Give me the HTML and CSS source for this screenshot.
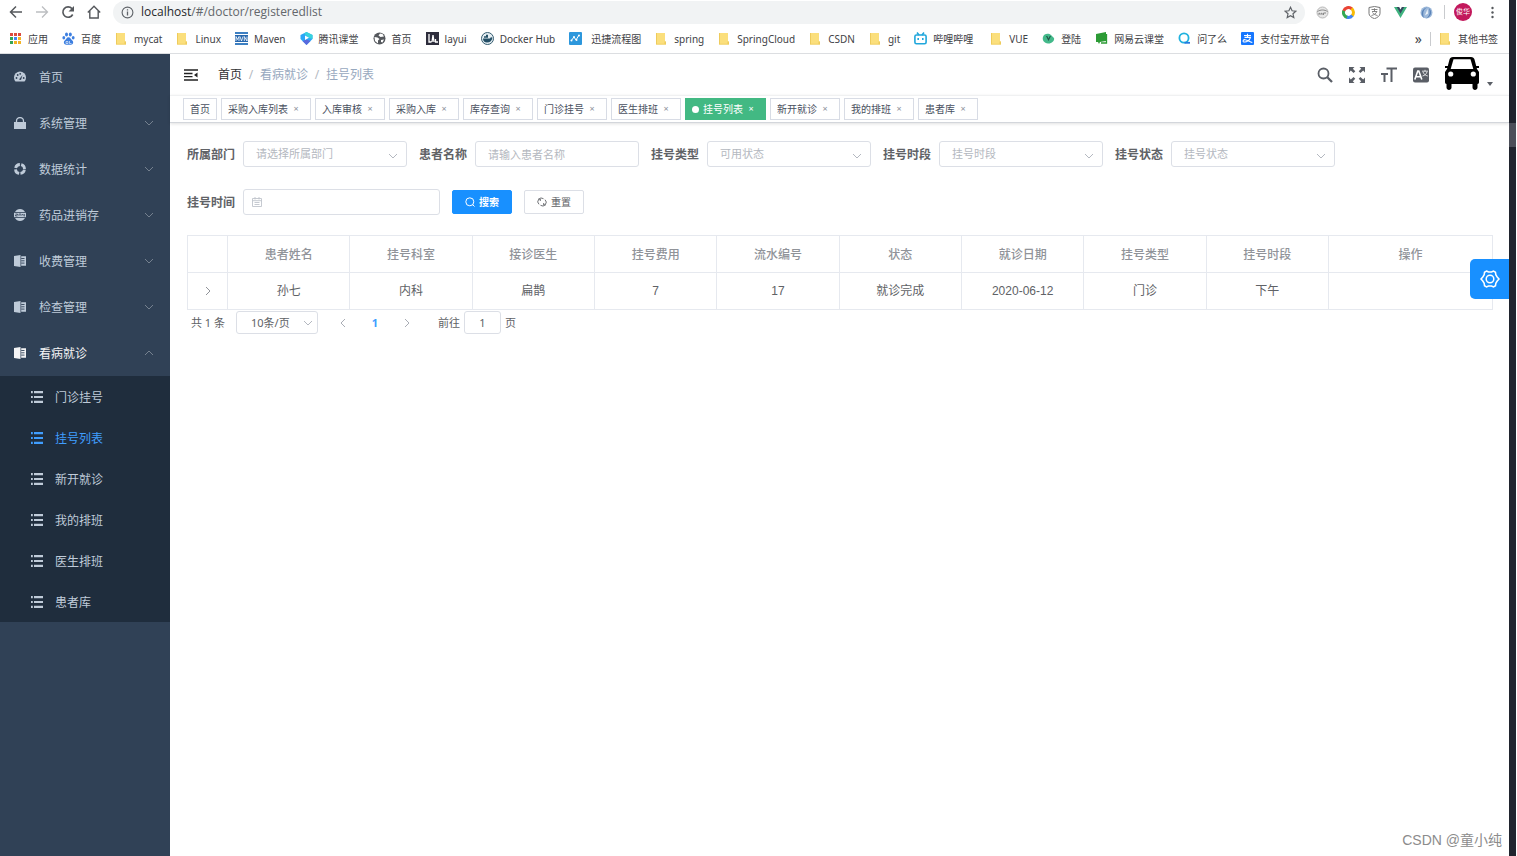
FILE: index.html
```html
<!DOCTYPE html>
<html lang="zh-CN">
<head>
<meta charset="utf-8">
<title>挂号列表</title>
<link rel="stylesheet" href="styles.css">
</head>
<body>
<svg class="defs" aria-hidden="true">
  <symbol id="folder" viewBox="0 0 13 13"><path d="M1 1h9v8l1 1v2.500H1z" fill="#fbdf7c"/><path d="M1 1h1v11.500H1zM1 11.800h10v.8H1zM9.500 9.500h1.500v2.500h-1.500z" fill="#eecb5c"/></symbol>
  <symbol id="down" viewBox="0 0 10 10"><path d="M1 3l4 4 4-4" fill="none" stroke="currentColor"/></symbol>
  <symbol id="right" viewBox="0 0 10 10"><path d="M3 1l4 4-4 4" fill="none" stroke="currentColor"/></symbol>
  <symbol id="book" viewBox="0 0 12 12"><path d="M0 1l6.500-1v12L0 11zM7.200 1.200H12v9.600H7.200z" fill="currentColor"/><path d="M7.200 3.500h3.300M7.200 5.800h3.300M7.200 8.100h3.300" stroke="#304156" stroke-width=".9"/></symbol>
  <symbol id="list" viewBox="0 0 12 12"><path d="M0 1.200h1.800M0 6h1.800M0 10.800h1.800M3 1.200h9M3 6h9M3 10.800h9" stroke="currentColor" stroke-width="2.200"/></symbol>
</svg>
<div class="screen">
<div class="browser">
  <header class="chrome">
    <div class="toolbar">
      <div class="history">
        <button aria-label="后退"><svg viewBox="0 0 14 14"><path d="M13 7H2M7 1.500L1.500 7 7 12.500" fill="none" stroke="#55585c" stroke-width="1.500"/></svg></button>
        <button aria-label="前进"><svg viewBox="0 0 14 14"><path d="M1 7h11M7 1.500L12.500 7 7 12.500" fill="none" stroke="#bcbec1" stroke-width="1.300"/></svg></button>
        <button aria-label="刷新"><svg viewBox="0 0 14 14"><path d="M11.700 9.500A5.200 5.200 0 1 1 11 3.600" fill="none" stroke="#55585c" stroke-width="1.600"/><path d="M13 1v5.500H7.500z" fill="#55585c"/></svg></button>
        <button aria-label="主页"><svg viewBox="0 0 14 14"><path d="M.8 7.500L7 1.300l6.200 6.200M2.800 6v7h8.400V6" fill="none" stroke="#55585c" stroke-width="1.400"/></svg></button>
      </div>
      <div class="omnibox">
        <svg class="ic13" viewBox="0 0 13 13"><circle cx="6.500" cy="6.500" r="5.400" fill="none" stroke="#5f6368" stroke-width="1.100"/><path d="M6.500 5.600v4M6.500 3.200v1.400" stroke="#5f6368" stroke-width="1.300"/></svg>
        <span class="url"><b>localhost</b>/#/doctor/registeredlist</span>
        <svg class="ic13" viewBox="0 0 13 13"><path d="M6.500 1.300l1.600 3.500 3.700.4-2.800 2.600.8 3.800-3.300-1.900-3.300 1.900.8-3.800L1.200 5.200l3.700-.4z" fill="none" stroke="#5f6368" stroke-width="1.200"/></svg>
      </div>
      <div class="extensions">
        <svg class="ic13" viewBox="0 0 13 13"><circle cx="6.500" cy="6.500" r="5.500" fill="#e6e6e6" stroke="#b8b8b8"/><path d="M1.500 5.500c3-2 7-2 10 0M3 9V7l1.500 1L6 7v2M7.500 9V7H10" fill="none" stroke="#888"/></svg>
        <svg class="ic13" viewBox="0 0 13 13" fill="none" stroke-width="3"><path d="M1.700 5A5 5 0 0 1 9.800 2.800" stroke="#e94335"/><path d="M9.500 2.500A5 5 0 0 1 10 10" stroke="#f9bb05"/><path d="M10.300 9.500A5 5 0 0 1 4.500 11" stroke="#4285f4"/><path d="M5 11.200A5 5 0 0 1 1.700 4.800" stroke="#34a853"/></svg>
        <svg class="ic13" viewBox="0 0 13 13"><path d="M1 1.500l5.500-1 5.500 1v6c0 2.500-2.500 4-5.500 5.200C3.500 11.500 1 10 1 7.500z" fill="#fff" stroke="#777"/><path d="M3.500 3.500h6M6.500 2.300v3M4 5.500h5c-1 2-3 3.500-5.500 4M4.500 6.500c1 1.500 3 2.700 5 3" fill="none" stroke="#777" stroke-width=".9"/></svg>
        <svg class="ic13" viewBox="0 0 13 13"><path d="M0 1h4l2.500 4.500L9 1h4L6.500 12z" fill="#3fb37f"/><path d="M2.700 1h2.500l1.300 2.400L7.800 1h2.500L6.500 7.500z" fill="#35495e"/></svg>
        <svg class="ic13" viewBox="0 0 13 13"><circle cx="6.500" cy="6.500" r="6" fill="#9db9da"/><path d="M8.500 1C3 3 2.500 7 4 12 0 9 1 2 8.500 1zM6 12.500C11 9 9.500 5 9 2c4 4 2 9-3 10.500z" fill="#5a83b8"/><path d="M7.500 3L5 9.500l3-2z" fill="#eef4fa"/></svg>
      </div>
      <span class="rule"></span>
      <button class="profile">俊华</button>
      <button class="dots" aria-label="菜单"><svg class="ic13" viewBox="0 0 13 13" fill="#55585c"><circle cx="6.500" cy="2" r="1.200"/><circle cx="6.500" cy="6.500" r="1.200"/><circle cx="6.500" cy="11" r="1.200"/></svg></button>
    </div>
    <nav class="bookmarks">
      <a href="#"><svg viewBox="0 0 13 13"><path d="M1 1h3v3H1zM5 1h3v3H5zM9 1h3v3H9z" fill="#dc4b3e"/><path d="M1 5h3v3H1z" fill="#35a455"/><path d="M5 5h3v3H5z" fill="#4285f4"/><path d="M9 5h3v3H9zM5 9h3v3H5zM9 9h3v3H9z" fill="#f3b325"/><path d="M1 9h3v3H1z" fill="#35a455"/><path d="M4 0h1v13H4zM8 0h1v13H8zM0 4h13v1H0zM0 8h13v1H0z" fill="#fff"/></svg>应用</a>
      <a href="#"><svg viewBox="0 0 13 13" fill="#3d7fe0"><ellipse cx="4.500" cy="2.500" rx="1.500" ry="2"/><ellipse cx="8.300" cy="2.500" rx="1.500" ry="2"/><ellipse cx="1.800" cy="5.700" rx="1.400" ry="1.800"/><ellipse cx="11.200" cy="5.700" rx="1.400" ry="1.800"/><path d="M6.500 5.300c2 0 2.300 2 3.800 3.200 1.700 1.500.8 4.300-1.500 4.200H4.200C2 12.700 1 10 2.800 8.500 4.300 7.300 4.500 5.300 6.500 5.300z"/><path d="M4 9.500h2v2H4zM7.500 9v2.500h2" fill="none" stroke="#fff" stroke-width=".6"/></svg>百度</a>
      <a href="#"><svg><use href="#folder"/></svg>mycat</a>
      <a href="#"><svg><use href="#folder"/></svg>Linux</a>
      <a href="#"><svg viewBox="0 0 13 13"><path d="M0 0h13v2H0zM0 11h13v2H0z" fill="#3c7fc2"/><path d="M0 3h13v7H0z" fill="#2767ae"/><path d="M1 9V4.500l1.500 3 1.500-3V9M5 4.500L6.500 9 8 4.500M9.300 9V4.500L12 9V4.500" fill="none" stroke="#fff" stroke-width=".8"/></svg>Maven</a>
      <a href="#"><svg viewBox="0 0 13 13"><path d="M6.500 0L12.500 3v4L6.500 13 .5 7V3z" fill="#2ba5f7"/><path d="M2.500 9L6.500 13l4-4-4-1.500z" fill="#5a69dc"/><path d="M6.500 0L12.500 3v4L9 6 4 1.500z" fill="#38d3dc"/><path d="M5 3.500L9 5.700 5 8z" fill="#fff"/></svg>腾讯课堂</a>
      <a href="#"><svg viewBox="0 0 13 13"><circle cx="6.500" cy="6.500" r="6" fill="#55585d"/><path d="M1.500 5l3 .5 2 1.500L5 8.500v3L2 9zM7 1.500L5.500 3.500l2 1.500 3.500-.5-1.500-2.500zM8 8l3-.5-1.500 3-1.500-.5z" fill="#fff"/></svg>首页</a>
      <a href="#"><svg viewBox="0 0 13 13"><path d="M0 0h13v13H0z" fill="#2e2d3c"/><path d="M3 2v8h2.500M6 10L7 3l1 7M9.500 7v3H12" fill="none" stroke="#fff" stroke-width="1.300"/></svg>layui</a>
      <a href="#"><svg viewBox="0 0 13 13"><circle cx="6.500" cy="6.500" r="6" fill="#e5eef3" stroke="#345b6e"/><path d="M2 6.500h7l1-1.500 1.500 1C10.500 9 9 10.500 6 10.500c-2.500 0-4-1.500-4-4z" fill="#244f66"/><path d="M3 5h4M5 3.500h2" stroke="#244f66" stroke-width="1.300"/></svg>Docker Hub</a>
      <a href="#"><svg viewBox="0 0 13 13"><rect width="13" height="13" rx="1" fill="#2d97dc"/><path d="M2 9l3-4 2 3 3-5" fill="none" stroke="#fff"/><g fill="#fff"><circle cx="2.500" cy="8.500" r="1"/><circle cx="5" cy="5" r="1"/><circle cx="7.500" cy="8" r="1"/><circle cx="10" cy="3.500" r="1"/></g></svg><span class="inset">迅捷流程图</span></a>
      <a href="#"><svg><use href="#folder"/></svg>spring</a>
      <a href="#"><svg><use href="#folder"/></svg>SpringCloud</a>
      <a href="#"><svg><use href="#folder"/></svg>CSDN</a>
      <a href="#"><svg><use href="#folder"/></svg>git</a>
      <a href="#"><svg viewBox="0 0 13 13" fill="none" stroke="#20a7dc" stroke-width="1.600"><rect x=".9" y="3" width="11.200" height="8.800" rx="1.500"/><path d="M3 .5l2 2.500M10 .5L8 3M4.200 6v2M8.800 6v2"/></svg>哔哩哔哩</a>
      <a class="apart" href="#"><svg><use href="#folder"/></svg>VUE</a>
      <a href="#"><svg viewBox="0 0 13 13"><path d="M1 5c1-4 6-4 8-2l3 3c1 3-3 6-6 5.500C2 11 0 8 1 5z" fill="#43b98a"/><path d="M4 4l2.500 5L9 4H7.700L6.500 6.500 5.300 4z" fill="#225347"/></svg>登陆</a>
      <a href="#"><svg viewBox="0 0 13 13"><path d="M1 2l10-2v9l-6 1-1 2-1-2H1z" fill="#2c9b35"/><path d="M11.500 2v9H6" fill="none" stroke="#2c9b35" stroke-width="1.300"/></svg>网易云课堂</a>
      <a href="#"><svg viewBox="0 0 13 13" fill="none" stroke="#20b2df" stroke-width="1.800"><circle cx="6" cy="6" r="4.600"/><path d="M6.500 10.800H12" stroke="#267ae0"/></svg>问了么</a>
      <a href="#"><svg viewBox="0 0 13 13"><rect width="13" height="13" rx="1" fill="#1677ff"/><path d="M3 3.500h7M6.500 1.800v3.400M3.500 5.400h6C8.800 8 6 10.500 2.800 10c-1.500-.7-.5-2.700 1.500-2.300 2 .3 4 1.800 7 2.800" fill="none" stroke="#fff" stroke-width="1.100"/></svg>支付宝开放平台</a>
      <span class="more"><button class="overflow">»</button><span class="rule"></span><a href="#"><svg><use href="#folder"/></svg>其他书签</a></span>
    </nav>
  </header>

  <div class="app">
    <aside class="sidebar">
      <a class="item" href="#"><svg viewBox="0 0 12 12"><path d="M1.500 10.500A6 6 0 1 1 10.500 10.500z" fill="currentColor"/><g fill="#304156"><circle cx="2.500" cy="7" r=".9"/><circle cx="3.700" cy="4" r=".9"/><circle cx="6.200" cy="2.800" r=".9"/><circle cx="9.700" cy="7" r=".9"/><path d="M5 8.500L8.500 4 7 9z"/></g></svg>首页</a>
      <a class="item" href="#"><svg viewBox="0 0 12 12"><path d="M0 5h12v7H0z" fill="currentColor"/><path d="M2.500 5.500V4a3.500 3.500 0 0 1 7 0v1.500" fill="none" stroke="currentColor" stroke-width="1.300"/></svg>系统管理<svg class="arrow"><use href="#down"/></svg></a>
      <a class="item" href="#"><svg viewBox="0 0 12 12"><circle cx="6" cy="6" r="4.500" fill="none" stroke="currentColor" stroke-width="2.800" stroke-dasharray="5.700 1.368" stroke-dashoffset="-.7"/></svg>数据统计<svg class="arrow"><use href="#down"/></svg></a>
      <a class="item" href="#"><svg viewBox="0 0 12 12"><path d="M1 3a5.700 5.700 0 0 1 10 0zM1 9a5.700 5.700 0 0 0 10 0z" fill="currentColor"/><path d="M0 3.800h12v4.400H0z" fill="currentColor"/><path d="M1.500 5h2v1h-2v1h2M5 7V5h2v2M8.500 5v1h2M10.300 5v2.500" fill="none" stroke="#304156" stroke-width=".7"/></svg>药品进销存<svg class="arrow"><use href="#down"/></svg></a>
      <a class="item" href="#"><svg><use href="#book"/></svg>收费管理<svg class="arrow"><use href="#down"/></svg></a>
      <a class="item" href="#"><svg><use href="#book"/></svg>检查管理<svg class="arrow"><use href="#down"/></svg></a>
      <a class="item open" href="#"><svg><use href="#book"/></svg>看病就诊<svg class="arrow"><use href="#down"/></svg></a>
      <div class="submenu">
        <a href="#"><svg><use href="#list"/></svg>门诊挂号</a>
        <a class="current" href="#"><svg><use href="#list"/></svg>挂号列表</a>
        <a href="#"><svg><use href="#list"/></svg>新开就诊</a>
        <a href="#"><svg><use href="#list"/></svg>我的排班</a>
        <a href="#"><svg><use href="#list"/></svg>医生排班</a>
        <a href="#"><svg><use href="#list"/></svg>患者库</a>
      </div>
    </aside>

    <main class="main">
      <div class="navbar">
        <button class="fold" aria-label="收起菜单"><svg viewBox="0 0 14 12"><path d="M0 1h14M0 4.500h8.500M0 7.700h8.500M0 11h14" stroke="#222" stroke-width="1.300"/><path d="M13.500 3.500v5L10 6z" fill="#222"/></svg></button>
        <nav class="crumbs"><a href="#">首页</a><i>/</i><span>看病就诊</span><i>/</i><span>挂号列表</span></nav>
        <div class="tools">
          <button aria-label="搜索"><svg viewBox="0 0 16 16" fill="none" stroke="#5a5e66"><circle cx="6.500" cy="6.500" r="5" stroke-width="1.800"/><path d="M10.300 10.300l4.700 4.700" stroke-width="2.300"/></svg></button>
          <button aria-label="全屏"><svg viewBox="0 0 16 16" fill="#5a5e66"><path d="M0 0h5.500L3.800 1.700l2.500 2.500-1.700 1.700-2.800-2.500L0 5.500zM16 0v5.500l-1.800-2.100-2.800 2.500-1.700-1.700 2.500-2.500L10.500 0zM0 16v-5.500l1.800 2.100 2.800-2.500 1.700 1.700-2.500 2.500L5.500 16zM16 16h-5.500l1.700-1.700-2.500-2.500 1.700-1.700 2.800 2.500 1.800-2.100z"/></svg></button>
          <button aria-label="字号"><svg viewBox="0 0 16 16" fill="none" stroke="#5a5e66" stroke-width="2"><path d="M5.500 1.500H16M10.500 1.500V15M0 7h7M3.500 7v8"/></svg></button>
          <button aria-label="语言"><svg viewBox="0 0 16 16"><rect y=".5" width="16" height="15" rx="2" fill="#5a5e66"/><path d="M1.800 12.500L4.800 4h1l3 8.500M3 9.800h4.500" fill="none" stroke="#fff" stroke-width="1.600"/><path d="M9 4.200h6M12 2.800v1.400M10 5c.8 2 2.500 3.500 4.800 4M14 5c-.7 2-2.300 3.500-4.500 4" fill="none" stroke="#fff" stroke-width=".8"/></svg></button>
          <button class="avatar" aria-label="用户"><svg class="car" viewBox="0 0 34 34"><path d="M8 1h18c2 0 3 1 3.500 2.500L32 13l2 3v10c0 1-.5 2-1.500 2v3.500c0 3.300-5 3.300-5 0V28h-21v3.500c0 3.300-5 3.300-5 0V28C.5 28 0 27 0 26V16l2-3L4.500 3.500C5 2 6 1 8 1z"/><path d="M8.500 3.200h17L28.300 13H5.700z" fill="#fff"/><circle cx="5.700" cy="18" r="2.600" fill="#fff"/><circle cx="28.300" cy="18" r="2.600" fill="#fff"/><path d="M0 10h3v2H0zM31 10h3v2h-3z"/></svg><svg class="caret" viewBox="0 0 6 4"><path d="M0 0h6L3 4z" fill="#5a5e66"/></svg></button>
        </div>
      </div>
      <div class="tags">
        <a href="#">首页</a>
        <a href="#">采购入库列表<i>×</i></a>
        <a href="#">入库审核<i>×</i></a>
        <a href="#">采购入库<i>×</i></a>
        <a href="#">库存查询<i>×</i></a>
        <a href="#">门诊挂号<i>×</i></a>
        <a href="#">医生排班<i>×</i></a>
        <a href="#" class="active">挂号列表<i>×</i></a>
        <a href="#">新开就诊<i>×</i></a>
        <a href="#">我的排班<i>×</i></a>
        <a href="#">患者库<i>×</i></a>
      </div>

      <div class="content">
        <form class="filters">
          <div class="field"><label for="dept">所属部门</label><div class="pick"><select id="dept"><option>请选择所属部门</option></select><svg><use href="#down"/></svg></div></div>
          <div class="field"><label for="name">患者名称</label><input id="name" type="text" placeholder="请输入患者名称"></div>
          <div class="field"><label for="type">挂号类型</label><div class="pick"><select id="type"><option>可用状态</option></select><svg><use href="#down"/></svg></div></div>
          <div class="field"><label for="slot">挂号时段</label><div class="pick"><select id="slot"><option>挂号时段</option></select><svg><use href="#down"/></svg></div></div>
          <div class="field"><label for="state">挂号状态</label><div class="pick"><select id="state"><option>挂号状态</option></select><svg><use href="#down"/></svg></div></div>
          <div class="break"></div>
          <div class="field"><label for="date">挂号时间</label><div class="date"><input id="date" type="text"><svg viewBox="0 0 10 10"><path d="M.5 1.500h9v8h-9zM.5 3.700h9M3 0v2.500M7 0v2.500M2.500 5.500h5M2.500 7.500h5" fill="none" stroke="#c0c4cc" stroke-width=".9"/></svg></div></div>
          <button type="button" class="btn primary"><svg viewBox="0 0 10 10" fill="none" stroke="#fff"><circle cx="4.800" cy="4.800" r="4"/><path d="M7.500 7.500l2 2"/></svg>搜索</button>
          <button type="button" class="btn"><svg viewBox="0 0 10 10" fill="none" stroke="#606266" stroke-width=".9"><path d="M2 7.300A3.600 3.600 0 0 1 6.500 1.700M8 2.700A3.600 3.600 0 0 1 3.500 8.300M1.300 2h2v2M8.700 8h-2V6"/></svg>重置</button>
        </form>

        <table>
          <colgroup><col class="c-expand"><col span="9"><col class="c-ops"></colgroup>
          <thead><tr><th></th><th>患者姓名</th><th>挂号科室</th><th>接诊医生</th><th>挂号费用</th><th>流水编号</th><th>状态</th><th>就诊日期</th><th>挂号类型</th><th>挂号时段</th><th>操作</th></tr></thead>
          <tbody><tr><td><button class="expand" aria-label="展开"><svg><use href="#right"/></svg></button></td><td>孙七</td><td>内科</td><td>扁鹊</td><td>7</td><td>17</td><td>就诊完成</td><td>2020-06-12</td><td>门诊</td><td>下午</td><td></td></tr></tbody>
        </table>

        <div class="pager">
          <span class="total">共 1 条</span>
          <div class="pick size"><select aria-label="每页条数"><option>10条/页</option></select><svg><use href="#down"/></svg></div>
          <button class="prev" aria-label="上一页"><svg><use href="#right"/></svg></button>
          <button class="page">1</button>
          <button aria-label="下一页"><svg><use href="#right"/></svg></button>
          <label class="jump">前往<input type="text" value="1">页</label>
        </div>
      </div>
      <button class="settings" aria-label="设置"><svg viewBox="0 0 20 20" fill="none" stroke="#fff" stroke-width="1.500"><path d="M6.500 2l2 1h3l2-1 2 1.300.3 2.400 1.400 2.300 1.800 2-1.800 2-1.400 2.300-.3 2.400-2 1.300-2-1h-3l-2 1-2-1.300-.3-2.400L2.800 12 1 10l1.800-2 1.400-2.300.3-2.400z"/><circle cx="10" cy="10" r="3.800"/></svg></button>
      <div class="watermark">CSDN @童小纯</div>
    </main>
  </div>
</div>
<div class="edge"><span></span></div>
</div>
</body>
</html>
```
FILE: styles.css
```css
* { box-sizing: border-box; }
body {
  margin: 0;
  background: #fff;
  color: #606266;
  font: 12px/16px "Noto Sans", "Noto Sans CJK SC", sans-serif;
}
a { color: inherit; text-decoration: none; }
i { font-style: normal; }
button { padding: 0; border: 0; background: none; color: inherit; font: inherit; }
svg { display: block; flex: none; }
.defs { position: absolute; width: 0; height: 0; }
.ic13 { width: 13px; height: 13px; }
.sidebar, .field label, th { font-family: "Noto Sans CJK SC", sans-serif; line-height: 18px; }

.screen { display: flex; min-height: 100vh; padding-right: 1px; }
.browser { display: flex; flex-direction: column; flex: 1; min-width: 0; }
.edge { width: 7px; padding-top: 123px; background: #20242e; }
.edge span { display: block; height: 24px; background: #4c4f59; }

/* Browser bars */
.chrome { border-bottom: 1px solid #dcdee1; }
.toolbar { display: flex; align-items: center; height: 24px; padding: 0 10px 0 9px; }
.history { display: flex; gap: 12px; margin-right: 12px; }
.history svg { width: 14px; height: 14px; }
.omnibox {
  display: flex;
  align-items: center;
  gap: 7px;
  flex: 1;
  height: 23px;
  padding: 0 8px;
  border-radius: 12px;
  background: #f1f3f4;
  color: #63676b;
}
.url { flex: 1; font-family: "Open Sans", sans-serif; }
.url b { color: #27292c; font-weight: 400; }
.extensions { display: flex; gap: 13px; margin: 0 11px; }
.rule { width: 1px; height: 14px; background: #c9cbce; }
.profile {
  width: 18px;
  height: 18px;
  margin: 0 14px 0 9px;
  border-radius: 50%;
  background: #c2185b;
  color: #fff;
  font-size: 7px;
  line-height: 18px;
  white-space: nowrap;
}
.bookmarks {
  display: flex;
  align-items: center;
  gap: 14px;
  height: 29px;
  padding: 0 11px 0 9px;
  color: #3f4246;
  font-size: 10px;
  white-space: nowrap;
}
.bookmarks a { display: flex; align-items: center; gap: 6px; }
.bookmarks svg { width: 13px; height: 13px; }
.bookmarks .apart { margin-left: 3px; }
.inset { padding-left: 3px; }
.more { display: flex; align-items: center; gap: 8px; margin-left: auto; }
.overflow { font-size: 14px; }

/* Sidebar */
.app { display: flex; flex: 1; }
.sidebar { flex: none; width: 170px; background: #304156; color: #bfcbd9; }
.sidebar a { display: flex; align-items: center; }
.sidebar svg { width: 12px; height: 12px; }
.item { gap: 13px; height: 46px; padding: 0 16px 0 14px; }
.item .arrow { width: 10px; height: 10px; margin-left: auto; color: #75818f; }
.open { color: #f4f4f5; }
.open .arrow { transform: rotate(180deg); }
.submenu { background: #1f2d3d; }
.submenu a { gap: 12px; height: 41px; padding-left: 31px; }
.submenu .current { color: #409eff; }

/* Header */
.main { position: relative; flex: 1; min-width: 0; }
.navbar { display: flex; align-items: center; height: 41px; padding: 0 16px 0 14px; }
.fold svg { width: 14px; height: 12px; }
.crumbs { display: flex; margin-left: 20px; color: #97a8be; }
.crumbs a { color: #303133; }
.crumbs i { width: 18px; color: #b4b9c2; text-align: center; }
.tools { display: flex; align-items: center; gap: 16px; margin-left: auto; }
.tools svg { width: 16px; height: 16px; }
.avatar { display: flex; align-items: flex-end; gap: 8px; padding-bottom: 3px; }
.tools .car { width: 34px; height: 34px; }
.tools .caret { width: 6px; height: 4px; margin-bottom: 4px; }
.tags {
  display: flex;
  align-items: center;
  gap: 4px;
  height: 28px;
  padding-left: 13px;
  border-top: 1px solid #f0f1f2;
  border-bottom: 1px solid #d3d6db;
  box-shadow: 0 1px 3px #0000001f;
}
.tags a {
  display: flex;
  align-items: center;
  height: 22px;
  padding: 0 6px;
  border: 1px solid #d8dce5;
  color: #495060;
  font-size: 10px;
  white-space: nowrap;
}
.tags i { width: 16px; color: #8d929b; font-size: 9px; text-align: center; }
.tags .active { border-color: #42b983; background: #42b983; color: #fff; }
.tags .active::before { content: ""; width: 7px; height: 7px; margin-right: 4px; border-radius: 50%; background: #fff; }
.tags .active i { color: #fff; }

/* Filters */
.content { padding: 18px 16px 0 17px; }
.filters { display: flex; flex-wrap: wrap; align-items: center; gap: 12px; row-gap: 11px; margin-bottom: 20px; }
.field { display: flex; align-items: center; gap: 8px; }
.field label { width: 48px; font-weight: 700; white-space: nowrap; }
.field input, .pick select {
  width: 164px;
  height: 26px;
  padding: 0 12px;
  border: 1px solid #dcdfe6;
  border-radius: 3px;
  background: #fff;
  color: #b4b8c0;
  font: inherit;
  font-size: 11px;
  appearance: none;
}
.field input::placeholder { color: #b4b8c0; }
.pick, .date { position: relative; }
.pick svg { position: absolute; right: 9px; top: 10px; width: 10px; height: 10px; color: #b4b8c0; }
.date input { width: 197px; }
.date svg { position: absolute; left: 9px; top: 8px; width: 10px; height: 10px; }
.break { flex-basis: 100%; }
.btn {
  display: flex;
  align-items: center;
  justify-content: center;
  gap: 4px;
  width: 60px;
  height: 24px;
  border: 1px solid #dcdfe6;
  border-radius: 2px;
  font-size: 10px;
}
.btn svg { width: 10px; height: 10px; }
.primary { border-color: #1890ff; background: #1890ff; color: #fff; font-weight: 700; }

/* Table */
table { width: 100%; border-collapse: collapse; table-layout: fixed; text-align: center; }
.c-expand { width: 40px; }
.c-ops { width: 164px; }
th, td { height: 37px; padding: 0; border: 1px solid #e6e9ef; }
th { color: #909399; font-weight: 500; }
td { font-family: "Liberation Sans", "Noto Sans CJK SC", sans-serif; }
.expand { display: block; margin: auto; color: #909399; }
.expand svg { width: 10px; height: 10px; }

.pager { display: flex; align-items: center; margin-top: 1px; padding-left: 4px; font-size: 11px; }
.total { margin-right: 11px; }
.size select { width: 82px; height: 23px; padding: 0 14px; color: #606266; }
.size svg { right: 5px; top: 7px; }
.pager button { width: 32px; color: #a9adb5; }
.pager button svg { width: 10px; height: 10px; margin: auto; }
.pager .prev { margin-left: 9px; }
.prev svg { transform: rotate(180deg); }
.pager .page { color: #409eff; font-weight: 700; }
.jump { display: flex; align-items: center; gap: 4px; margin-left: 15px; }
.jump input {
  width: 37px;
  height: 23px;
  padding: 0;
  border: 1px solid #dcdfe6;
  border-radius: 3px;
  color: #606266;
  font: inherit;
  text-align: center;
}

.settings {
  position: absolute;
  top: 205px;
  right: 0;
  width: 39px;
  height: 40px;
  border-radius: 5px 0 0 5px;
  background: #1890ff;
}
.settings svg { width: 20px; height: 20px; margin: auto; }
.watermark {
  position: absolute;
  right: 7px;
  bottom: 6px;
  color: #8c8c8c;
  font: 14px/20px "Liberation Sans", "Noto Sans CJK SC", sans-serif;
}
```
